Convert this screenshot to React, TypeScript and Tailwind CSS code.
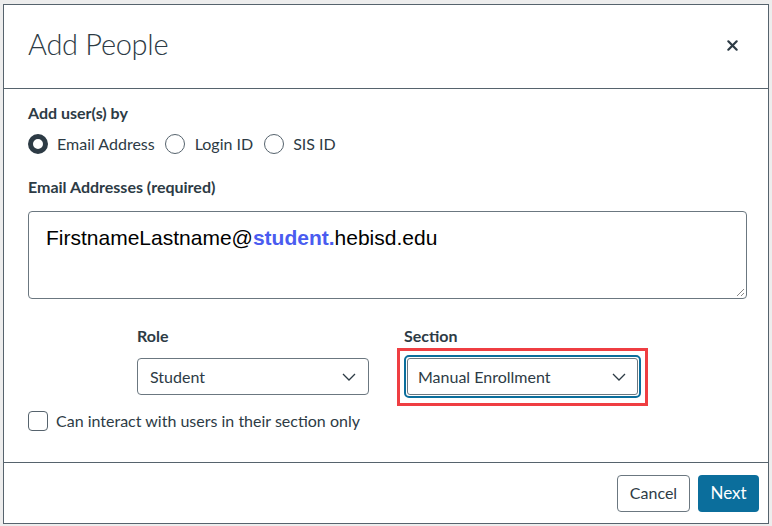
export default function App() {
  return (
    <div className="w-[772px] h-[526px] bg-[#ededed] pt-[4px] pl-[3px]" style={{ fontFamily: "Lato, 'Noto Sans', sans-serif" }}>
      <div className="w-[766px] h-[520px] bg-white border border-[#56636d] flex flex-col text-[#2d3b45]">
        <div className="h-[84px] shrink-0 flex items-center justify-between pl-[24px] pr-[29px] border-b border-[#56636d]">
          <h1 className="text-[29px] font-light tracking-[-0.3px] mt-[-5px]">Add People</h1>
          <svg width="13" height="13" viewBox="0 0 14 14" className="mt-[-2px]">
            <path d="M2.5 2.5 L11.5 11.5 M11.5 2.5 L2.5 11.5" stroke="#2d3b45" strokeWidth="2.4" strokeLinecap="round" />
          </svg>
        </div>

        <div className="flex-1 pl-[24px] pr-[21px] pt-[14px] text-[16px]">
          <div className="font-bold leading-[20px]">Add user(s) by</div>
          <div className="flex items-center mt-[11px] leading-[20px]">
            <div className="w-[20px] h-[20px] rounded-full border-[5px] border-[#2d3b45] bg-white" />
            <span className="ml-[9px]">Email Address</span>
            <div className="ml-[10px] w-[20px] h-[20px] rounded-full border border-[#56636d] bg-white" />
            <span className="ml-[10px]">Login ID</span>
            <div className="ml-[11px] w-[20px] h-[20px] rounded-full border border-[#56636d] bg-white" />
            <span className="ml-[9px]">SIS ID</span>
          </div>
          <div className="font-bold leading-[20px] mt-[23px]">Email Addresses (required)</div>
          <div className="mt-[14px] h-[88px] border border-[#6b7780] rounded-[4px] relative pl-[17px] pt-[13px]">
            <div className="text-[21px] leading-[26px] text-black" style={{ fontFamily: "'Liberation Sans', Arial, sans-serif" }}>
              FirstnameLastname@<span className="font-bold text-[#4a5cf0]">student.</span>hebisd.edu
            </div>
            <svg width="9" height="9" viewBox="0 0 9 9" className="absolute right-[1px] bottom-[1px]">
              <path d="M8 1 L1 8 M8 5 L5 8" stroke="#888" strokeWidth="1" />
            </svg>
          </div>

          <div className="flex mt-[27px] pl-[109px] gap-[35px]">
            <div className="w-[232px]">
              <div className="font-bold leading-[20px]">Role</div>
              <div className="mt-[12px] h-[37px] border border-[#6b7780] rounded-[4px] flex items-center justify-between pl-[12px] pr-[12px]">
                <span>Student</span>
                <svg width="14" height="8" viewBox="0 0 14 8">
                  <path d="M1 1 L7 7 L13 1" fill="none" stroke="#2d3b45" strokeWidth="1.3" />
                </svg>
              </div>
            </div>
            <div className="w-[234px]">
              <div className="font-bold leading-[20px]">Section</div>
              <div className="mt-[2px] -ml-[7px] w-[251px] border-[3px] border-[#ef3e42] pt-[4px] pb-[5px] px-[4px]">
                <div className="border-[2px] border-[#0b6e9c] rounded-[5px] p-[1px]">
                  <div className="h-[37px] border border-[#6b7780] rounded-[3px] flex items-center justify-between pl-[10px] pr-[11px]">
                    <span>Manual Enrollment</span>
                    <svg width="14" height="8" viewBox="0 0 14 8">
                      <path d="M1 1 L7 7 L13 1" fill="none" stroke="#2d3b45" strokeWidth="1.3" />
                    </svg>
                  </div>
                </div>
              </div>
            </div>
          </div>

          <div className="flex items-center mt-[5px] leading-[20px]">
            <div className="w-[20px] h-[20px] rounded-[4px] border border-[#56636d] bg-white" />
            <span className="ml-[8px]">Can interact with users in their section only</span>
          </div>
        </div>

        <div className="h-[61px] shrink-0 border-t border-[#56636d] flex items-center justify-end gap-[8px] pr-[9px]">
          <button className="h-[37px] w-[73px] border border-[#6b7780] rounded-[4px] bg-white text-[16px] text-[#2d3b45]">Cancel</button>
          <button className="h-[37px] w-[61px] rounded-[4px] bg-[#0b6e9c] text-[17px] text-white">Next</button>
        </div>
      </div>
    </div>
  )
}
